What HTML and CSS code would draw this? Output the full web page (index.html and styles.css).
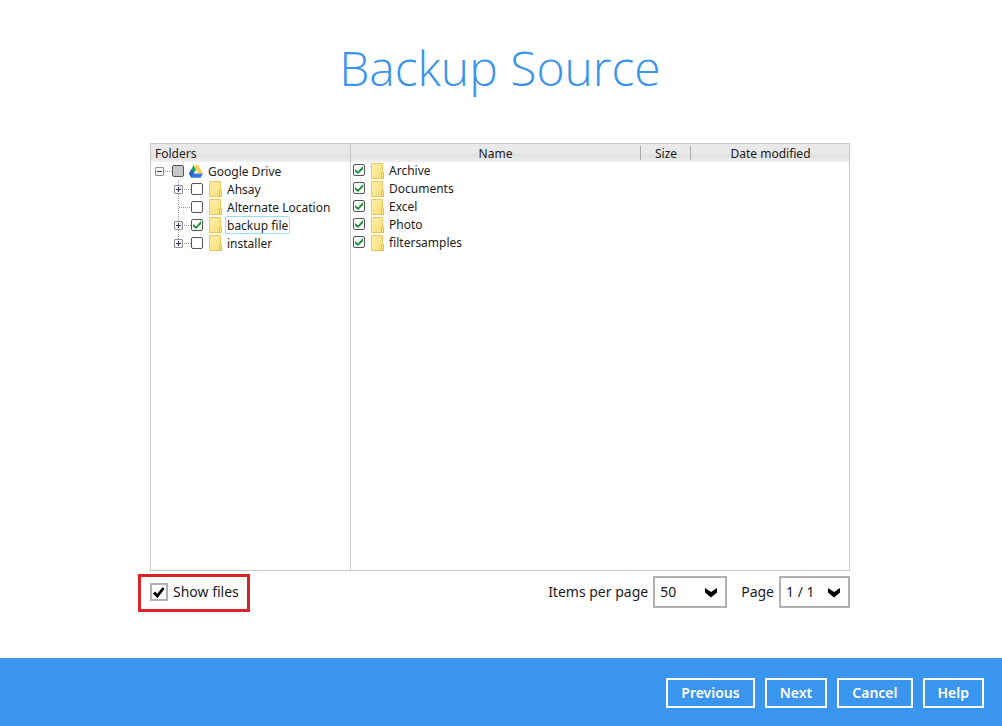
FILE: index.html
```html
<!DOCTYPE html>
<html lang="en">
<head>
<meta charset="utf-8">
<title>Backup Source</title>
<link rel="stylesheet" href="styles.css">
</head>
<body>
<svg class="defs" aria-hidden="true">
  <defs>
    <linearGradient id="fold" x1="0" y1="0" x2="1" y2="1">
      <stop offset="0" stop-color="#ffefae"/>
      <stop offset="1" stop-color="#fbdc74"/>
    </linearGradient>
    <symbol id="folder" viewBox="0 0 14 16">
      <path d="M.5.5h11v9.500l1 1v4.500H.5z" fill="url(#fold)" stroke="#ecc75c"/>
      <path d="M10.500 15.500V10l1-1.500 1 1.500v5.500z" fill="#ffe684" stroke="#e4bf4a"/>
    </symbol>
  </defs>
</svg>
<main class="page">
  <h1 class="title">Backup Source</h1>
  <div class="browser">
    <section class="folders">
      <h2 class="folders-head">Folders</h2>
      <div class="row root">
        <button class="toggle open" aria-label="Collapse Google Drive"></button><span class="dots"></span>
        <input class="box" id="drive" type="checkbox" disabled>
        <svg class="drive" viewBox="0 0 14 13" aria-hidden="true">
          <path d="M4.600.300 0 8.500 2.400 12.700 7 4.500z" fill="#1fa463"/>
          <path d="M4.600.300h4.800l4.600 8.200H9.300z" fill="#ffd04b"/>
          <path d="M4.700 8.500H14l-2.400 4.200H2.400z" fill="#3777e3"/>
          <path d="M0 8.500 2.400 12.700 4.700 8.500 2.400 4.300z" fill="#2464d2"/>
        </svg>
        <label class="name" for="drive">Google Drive</label>
      </div>
      <ul class="tree">
        <li class="row"><button class="toggle" aria-label="Expand Ahsay"></button><span class="dots"></span><input class="box" id="f1" type="checkbox"><svg class="folder"><use href="#folder"/></svg><label class="name" for="f1">Ahsay</label></li>
        <li class="row"><span class="dots wide"></span><input class="box" id="f2" type="checkbox"><svg class="folder"><use href="#folder"/></svg><label class="name" for="f2">Alternate Location</label></li>
        <li class="row"><button class="toggle" aria-label="Expand backup file"></button><span class="dots"></span><input class="box" id="f3" type="checkbox" checked><svg class="folder"><use href="#folder"/></svg><label class="name selected" for="f3">backup file</label></li>
        <li class="row"><button class="toggle" aria-label="Expand installer"></button><span class="dots"></span><input class="box" id="f4" type="checkbox"><svg class="folder"><use href="#folder"/></svg><label class="name" for="f4">installer</label></li>
      </ul>
    </section>
    <section class="files">
      <table class="list">
        <thead><tr><th>Name</th><th class="size">Size</th><th class="date">Date modified</th></tr></thead>
        <tbody>
          <tr><td><div class="row"><input class="box" id="n1" type="checkbox" checked><svg class="folder"><use href="#folder"/></svg><label class="name" for="n1">Archive</label></div></td><td></td><td></td></tr>
          <tr><td><div class="row"><input class="box" id="n2" type="checkbox" checked><svg class="folder"><use href="#folder"/></svg><label class="name" for="n2">Documents</label></div></td><td></td><td></td></tr>
          <tr><td><div class="row"><input class="box" id="n3" type="checkbox" checked><svg class="folder"><use href="#folder"/></svg><label class="name" for="n3">Excel</label></div></td><td></td><td></td></tr>
          <tr><td><div class="row"><input class="box" id="n4" type="checkbox" checked><svg class="folder"><use href="#folder"/></svg><label class="name" for="n4">Photo</label></div></td><td></td><td></td></tr>
          <tr><td><div class="row"><input class="box" id="n5" type="checkbox" checked><svg class="folder"><use href="#folder"/></svg><label class="name" for="n5">filtersamples</label></div></td><td></td><td></td></tr>
        </tbody>
      </table>
    </section>
  </div>
  <div class="options">
    <div class="show"><input class="show-box" id="show" type="checkbox" checked><label for="show">Show files</label></div>
    <div class="paging">
      <label for="per">Items per page</label>
      <select class="pick per" id="per"><option>50</option></select>
      <label class="page-label" for="pg">Page</label>
      <select class="pick" id="pg"><option>1 / 1</option></select>
    </div>
  </div>
</main>
<footer class="actions">
  <button class="action">Previous</button>
  <button class="action">Next</button>
  <button class="action">Cancel</button>
  <button class="action">Help</button>
</footer>
</body>
</html>
```
FILE: styles.css
```css
* { box-sizing: border-box; }

body {
  margin: 0;
  min-height: 100vh;
  display: flex;
  flex-direction: column;
  background: #fff;
  color: #1c1c1c;
  font: 14px/20px "Noto Sans", "Open Sans", sans-serif;
}

button, select, input { margin: 0; font: inherit; color: inherit; }

.defs { position: absolute; width: 0; height: 0; }

.page {
  flex: 1;
  display: flex;
  flex-direction: column;
  padding: 36px 152px 46px 150px;
}

.title {
  margin: 0 0 43px;
  color: #3a95ea;
  font-family: "Open Sans", sans-serif;
  font-size: 48px;
  font-weight: 300;
  line-height: 64px;
  text-align: center;
}

.browser {
  flex: 1;
  display: flex;
  border: 1px solid #c8c8c8;
  font-size: 12px;
  line-height: 18px;
}

.folders { width: 200px; border-right: 1px solid #c8c8c8; }
.files { flex: 1; }

.folders-head, .list th {
  height: 18px;
  background: linear-gradient(#e9e9e9 0 55%, #dedede 60%, #f0f0f0);
  font-size: 12px;
  font-weight: 400;
  line-height: 16px;
}

.folders-head { margin: 0; padding: 2px 0 0 4px; }

.row { display: flex; align-items: center; height: 18px; }
.root { padding-left: 4px; }

.tree {
  margin: 0 0 0 27px;
  padding: 0;
  list-style: none;
  background: repeating-linear-gradient(#999 0 1px, transparent 1px 2px) 0 0 / 1px 64px no-repeat;
}
.tree .row { margin-left: -4px; }

.toggle {
  flex: none;
  width: 9px;
  height: 9px;
  padding: 0;
  border: 1px solid #929292;
  border-radius: 1px;
  background:
    linear-gradient(#34346a, #34346a) center / 5px 1px no-repeat,
    linear-gradient(#34346a, #34346a) center / 1px 5px no-repeat,
    #f4f4f4;
}
.toggle.open { background: linear-gradient(#444, #444) center / 5px 1px no-repeat, #f4f4f4; }

.dots {
  width: 8px;
  height: 1px;
  background: repeating-linear-gradient(90deg, transparent 0 1px, #999 1px 2px);
}
.dots.wide { width: 13px; margin-left: 4px; }

.box {
  flex: none;
  appearance: none;
  width: 12px;
  height: 12px;
  border: 1px solid #555;
  border-radius: 2px;
  background: #fff;
}
.box:disabled { background: #c8c8c8; }
.box:checked {
  background: #fff url("data:image/svg+xml,%3Csvg xmlns='http://www.w3.org/2000/svg' viewBox='0 0 10 10'%3E%3Cpath d='M1 4 4 6.500 9 1V4L4 9 1 6.500z' fill='%23169332'/%3E%3C/svg%3E") center / 10px 10px no-repeat;
}
.files .box { margin-bottom: 2px; }

.drive { width: 14px; height: 13px; margin: 0 5px; }
.folder { flex: none; width: 14px; height: 16px; margin: 0 2px 0 6px; }
.name { padding: 0 1px; border: 1px solid transparent; line-height: 16px; }
.folders .name { padding-top: 2px; line-height: 14px; }
.root .name { padding-left: 0; margin-left: -1px; }
.name.selected { border-color: #9adcf5; border-radius: 2px; }

.list { width: 100%; table-layout: fixed; border-collapse: collapse; }
.list td { padding: 0; }
.list th { padding: 2px 0 0; }
.list .size { width: 50px; }
.list .date { width: 159px; }
.list .size, .list .date {
  padding-left: 2px;
  background:
    linear-gradient(#aaa, #aaa) 0 center / 1px 14px no-repeat,
    linear-gradient(#e9e9e9 0 55%, #dedede 60%, #f0f0f0);
}
.list .row { padding-left: 2px; }

.options { display: flex; justify-content: space-between; margin-top: 3px; }

.show {
  display: flex;
  align-items: center;
  gap: 5px;
  height: 38px;
  margin-left: -12px;
  padding: 0 8px 2px 9px;
  border: 3px solid #dc2229;
}
.show-box {
  appearance: none;
  width: 18px;
  height: 18px;
  border: 2px solid #b0b0b0;
  background: url("data:image/svg+xml,%3Csvg xmlns='http://www.w3.org/2000/svg' viewBox='0 0 14 14'%3E%3Cpath d='M2 7.500 5.300 11 11.500 3' fill='none' stroke='%23000' stroke-width='2.800'/%3E%3C/svg%3E") center / 14px 14px no-repeat;
}

.paging { display: flex; align-items: center; gap: 5px; height: 36px; }
.pick {
  appearance: none;
  width: 71px;
  height: 32px;
  padding: 0 5px;
  border: 2px solid #b0b0b0;
  border-radius: 0;
  background: url("data:image/svg+xml,%3Csvg xmlns='http://www.w3.org/2000/svg' viewBox='0 0 14 10'%3E%3Cpath d='M1 0 7 4 13 0V4.500L7 9.500 1 4.500z'/%3E%3C/svg%3E") right 7px bottom 8px / 14px 10px no-repeat;
}
.per { width: 74px; }
.page-label { margin-left: 9px; }

.actions {
  display: flex;
  justify-content: flex-end;
  gap: 10px;
  padding: 20px 18px 18px;
  background: #3a95ee;
}
.action {
  height: 30px;
  padding: 0 13px;
  border: 2px solid #fff;
  background: transparent;
  color: #fff;
  font-weight: 600;
}
```
